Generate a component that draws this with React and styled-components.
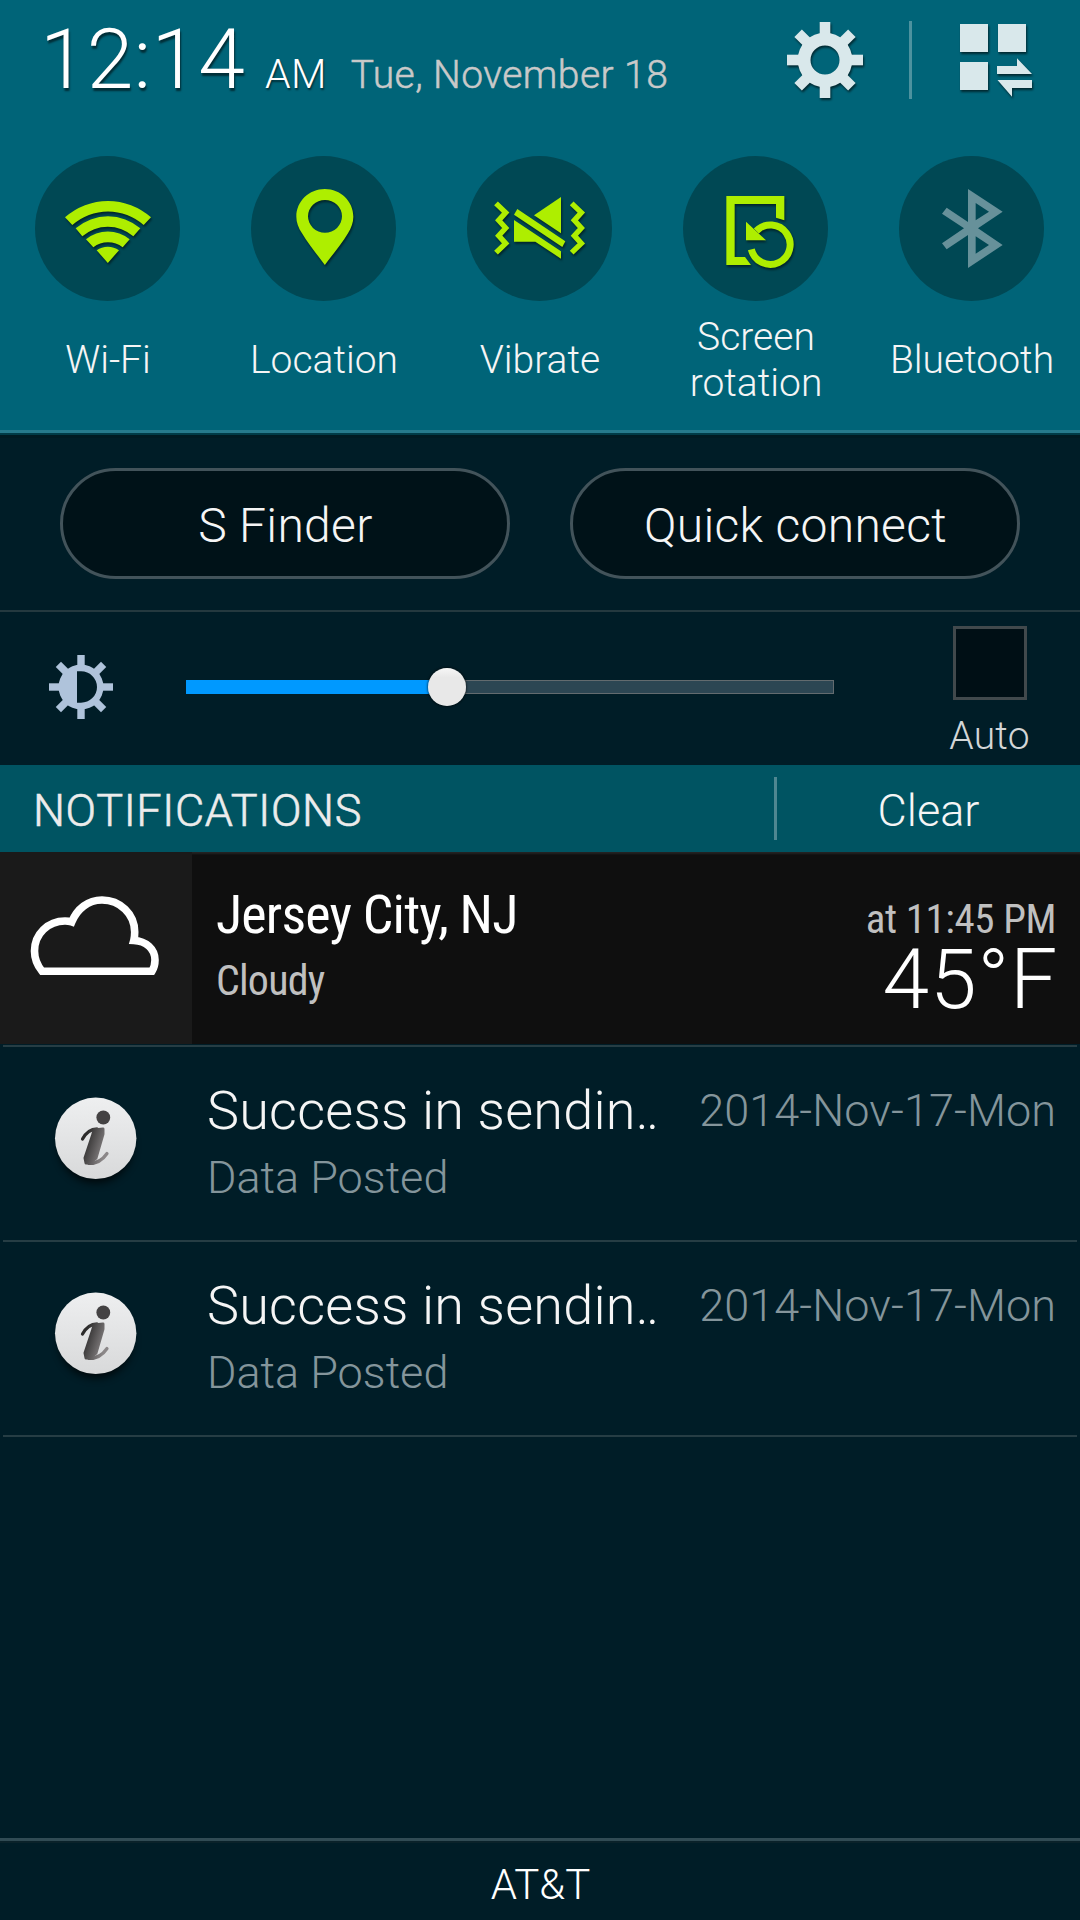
import React from "react";
import styled, { createGlobalStyle } from "styled-components";

const Global = createGlobalStyle`
  * { box-sizing: border-box; }
  html, body { margin: 0; padding: 0; background: #001d27; }
  body { font-family: Roboto, "Liberation Sans", sans-serif; font-weight: 300; }
  button { font: inherit; color: inherit; padding: 0; border: 0; background: none; }
`;

const Screen = styled.div`
  width: 1080px;
  height: 1920px;
  display: flex;
  flex-direction: column;
  overflow: hidden;
  background: #001d27;
  color: #f5f5f5;
`;

const TopPanel = styled.section`
  height: 438px;
  flex: none;
  background: #006478;
  border-bottom: 3px solid #001a22;
  box-shadow: inset 0 -2px #003b47, inset 0 -5px #267a8c;
`;

const Header = styled.header`
  height: 156px;
  display: flex;
  align-items: flex-start;
  padding: 18px 44px 0 40px;
`;

const Clock = styled.div`
  display: flex;
  align-items: baseline;
  white-space: nowrap;
  color: #fff;
`;

const Time = styled.span`
  font-size: 84px;
  line-height: 84px;
  letter-spacing: 0.2px;
  text-shadow: 1px 3px 2px rgba(0, 0, 0, 0.55);
`;

const Meridiem = styled.span`
  margin-left: 20px;
  font-size: 41px;
  letter-spacing: 0.3px;
  text-shadow: 1px 2px 2px rgba(0, 0, 0, 0.55);
`;

const DateText = styled.span`
  margin-left: 24px;
  font-size: 39px;
  letter-spacing: 0.45px;
  color: #c9c9c9;
  -webkit-text-stroke: 0.5px currentColor;
`;

const HeaderActions = styled.div`
  display: flex;
  align-items: flex-start;
  margin-left: auto;
`;

const HeaderIcon = styled.svg`
  width: 84px;
  height: 84px;
  fill: #d9e8eb;
  filter: drop-shadow(1px 2px 1px rgba(0, 0, 0, 0.6));
`;

const HeaderRule = styled.div`
  width: 3px;
  height: 78px;
  margin: 3px 40px 0 42px;
  background: #4d929f;
`;

const Toggles = styled.div`
  display: grid;
  grid-template-columns: repeat(5, 216px);
`;

const Toggle = styled.div`
  display: flex;
  flex-direction: column;
  align-items: center;
`;

const ToggleDisc = styled.div`
  width: 145px;
  height: 145px;
  margin-right: 1px;
  border-radius: 50%;
  background: #004854;
  color: ${(p) => (p.$on ? "#aeee00" : "#67919a")};
`;

const ToggleGlyph = styled.svg`
  display: block;
  width: 145px;
  height: 145px;
  fill: currentColor;
  filter: ${(p) => (p.$on ? "drop-shadow(1px 2px 1px rgba(0, 0, 0, 0.5))" : "none")};
`;

const ToggleLabel = styled.div`
  height: 117px;
  display: flex;
  align-items: center;
  text-align: center;
  white-space: pre;
  font-size: 39px;
  line-height: 46px;
`;

const QuickActions = styled.section`
  height: 174px;
  flex: none;
  display: flex;
  gap: 60px;
  padding: 30px 60px 0;
  border-bottom: 2px solid #24393f;
`;

const Pill = styled.button`
  width: 450px;
  height: 111px;
  padding: 4px 0 0 1px;
  border: 3px solid #42535a;
  border-radius: 56px;
  background: #001218;
  font-size: 48px;
  line-height: 101px;
  letter-spacing: 0.3px;
`;

const Brightness = styled.section`
  height: 153px;
  flex: none;
  display: flex;
  padding: 14px 0 0 49px;
`;

const BrightnessIcon = styled.svg`
  width: 64px;
  height: 64px;
  margin-top: 29px;
  fill: #afc3db;
`;

const Slider = styled.div`
  width: 648px;
  height: 38px;
  margin: 42px 0 0 73px;
  display: flex;
  align-items: center;
`;

const Filled = styled.div`
  height: 14px;
  background: #0099ff;
`;

const Thumb = styled.div`
  width: 38px;
  height: 38px;
  flex: none;
  border-radius: 50%;
  margin: 0 -1px;
  z-index: 1;
  background: linear-gradient(#f6f6f6, #e8e8e8 25%);
  box-shadow: 0 0 2px 1px rgba(0, 0, 0, 0.45);
`;

const Track = styled.div`
  height: 14px;
  flex: 1;
  background: #2c4653;
  border: 1px solid #636b6f;
`;

const Auto = styled.label`
  width: 100px;
  margin-left: 106px;
  display: flex;
  flex-direction: column;
  align-items: center;
  font-size: 39px;
  line-height: 46px;
  color: #d3d6d7;
`;

const AutoLabel = styled.span`
  margin-right: 1px;
  letter-spacing: 0.2px;
`;

const Checkbox = styled.span`
  width: 74px;
  height: 74px;
  margin-bottom: 13px;
  border: 3px solid #41494c;
  background: #000f15;
`;

const SectionBar = styled.section`
  height: 87px;
  flex: none;
  display: flex;
  align-items: center;
  padding: 0 0 0 33px;
  background: #005462;
  font-size: 45px;
  line-height: 60px;
`;

const SectionTitle = styled.h1`
  width: 741px;
  margin: 0;
  padding-top: 5px;
  font-size: inherit;
  font-weight: 300;
  letter-spacing: 0.65px;
  color: #ececec;
  -webkit-text-stroke: 0.6px currentColor;
`;

const SectionRule = styled.div`
  width: 3px;
  height: 63px;
  background: #4f8791;
`;

const ClearButton = styled.button`
  flex: 1;
  padding-top: 5px;
`;

const Weather = styled.article`
  height: 192px;
  flex: none;
  display: flex;
  background: #0f0f0f;
  box-shadow: inset 0 3px 2px -1px #242424;
`;

const WeatherIcon = styled.div`
  width: 192px;
  background: #1a1a1a;
`;

const CloudArt = styled.svg`
  display: block;
  width: 192px;
  height: 192px;
`;

const WeatherText = styled.div`
  flex: 1;
  display: flex;
  flex-direction: column;
  padding: 33px 0 0 24px;
  font-family: "Roboto Condensed", Roboto, sans-serif;
  font-weight: 400;
  letter-spacing: -0.8px;
`;

const City = styled.div`
  font-size: 54px;
  line-height: 60px;
  color: #fff;
`;

const Condition = styled.div`
  margin-top: 12px;
  font-size: 42px;
  line-height: 48px;
  color: #c0c0c0;
`;

const WeatherReading = styled.div`
  padding: 43px 24px 0 0;
  display: flex;
  flex-direction: column;
  align-items: flex-end;
`;

const ReadingTime = styled.div`
  font-family: "Roboto Condensed", Roboto, sans-serif;
  font-weight: 400;
  font-size: 41px;
  line-height: 48px;
  letter-spacing: -0.42px;
  color: #c0c0c0;
`;

const Temperature = styled.div`
  margin-right: -2px;
  font-size: 84px;
  line-height: 74px;
  letter-spacing: 0.8px;
  color: #fff;
`;

const Divider = styled.div`
  height: 2px;
  flex: none;
  margin: ${(p) => (p.$gap ? "1px" : "0")} 3px 0;
  background: #263d44;
`;

const Notice = styled.article`
  height: 193px;
  flex: none;
  display: flex;
  padding-right: 24px;
`;

const InfoBadge = styled.svg`
  width: 120px;
  height: 120px;
  margin: 31px 51px 0 36px;
  overflow: visible;
`;

const NoticeText = styled.div`
  flex: 1;
  padding-top: 34px;
`;

const NoticeTitle = styled.div`
  font-size: 54px;
  line-height: 60px;
  letter-spacing: 0.22px;
  white-space: nowrap;
`;

const Ellipsis = styled.span`
  letter-spacing: -2.4px;
`;

const NoticeBody = styled.div`
  margin-top: 12px;
  font-size: 45px;
  line-height: 50px;
  color: #84959b;
`;

const NoticeDate = styled.div`
  padding-top: 39px;
  font-size: 45px;
  line-height: 50px;
  letter-spacing: 0.06px;
  color: #84959b;
`;

const Footer = styled.footer`
  height: 82px;
  margin-top: auto;
  flex: none;
  display: flex;
  align-items: center;
  justify-content: center;
  padding: 9px 0 0 1px;
  border-top: 3px solid #304b54;
  box-shadow: inset 0 2px #0a222a;
  font-size: 42px;
  line-height: 50px;
  color: #fff;
`;

const ZIGZAG = "167,190 196,218 175,241 196,264 175,287 196,310 167,338";

const toggles = [
  {
    label: "Wi-Fi",
    on: true,
    box: "105 48 435 435",
    art: (
      <path d="M195,232 A194,194 0 0 1 453,232 L431,255 A161,161 0 0 0 217,255Z M227,265 A149,149 0 0 1 421,265 L400,289 A116,116 0 0 0 247,289Z M258,298 A104,104 0 0 1 389,298 L368,322 A71,71 0 0 0 280,322Z M290,331 A57,57 0 0 1 357,331 L323.5,369Z" />
    ),
  },
  {
    label: "Location",
    on: true,
    box: "752 48 435 435",
    art: (
      <path
        fillRule="evenodd"
        d="M973.5,375 C953,347 924,312 905,280 C894,262 888,248 888,230 C888,184 926,147 973.5,147 C1021,147 1059,184 1059,230 C1059,248 1053,262 1043,280 C1024,312 994,347 973.5,375Z M923,229 A51,49 0 1 0 1025,229 A51,49 0 1 0 923,229Z"
      />
    ),
  },
  {
    label: "Vibrate",
    on: true,
    box: "80 48 435 435",
    art: (
      <>
        <g fill="none" stroke="currentColor" strokeWidth="16">
          <polyline points={ZIGZAG} />
          <polyline points={ZIGZAG} transform="translate(227 0)" />
        </g>
        <polygon points="231,207 375,304 366,321 221,224" />
        <polygon points="281,226 362,171 362,280" />
        <polygon points="221,240 362,334 362,356 285,305 221,305" />
      </>
    ),
  },
  {
    label: "Screen\nrotation",
    on: true,
    box: "728 48 435 435",
    art: (
      <>
        <polygon points="858,168 1032,168 1032,241 1007,233 1007,192 883,192 883,351 914,351 932,375 858,375" />
        <path d="M933,328 A59,59 0 1 0 948,273" fill="none" stroke="currentColor" strokeWidth="21" />
        <polygon points="917,245 977,301 917,301" />
      </>
    ),
  },
  {
    label: "Bluetooth",
    on: false,
    box: "177 48 435 435",
    art: (
      <path
        fillRule="evenodd"
        d="M384,147 L488,215 L414,265 L488,315 L384,384 L384,285 L320,328 L306,310 L372,265 L306,221 L320,203 L384,246Z M407,189 L447,215 L407,241Z M407,289 L447,315 L407,341Z"
      />
    ),
  },
];

const notices = [
  { id: 1, title: "Success in sendin", body: "Data Posted", date: "2014-Nov-17-Mon" },
  { id: 2, title: "Success in sendin", body: "Data Posted", date: "2014-Nov-17-Mon" },
];

const GearIcon = () => (
  <HeaderIcon viewBox="-42 -42 84 84">
    <path
      fillRule="evenodd"
      d="M-27.3,0 A27.3,27.3 0 1 0 27.3,0 A27.3,27.3 0 1 0 -27.3,0Z M-14.5,0 A14.5,14.5 0 1 0 14.5,0 A14.5,14.5 0 1 0 -14.5,0Z"
    />
    {[0, 45, 90, 135, 180, 225, 270, 315].map((a) => (
      <rect key={a} x="-5.3" y="-38" width="10.6" height="14" transform={`rotate(${a})`} />
    ))}
  </HeaderIcon>
);

const EditPanelsIcon = () => (
  <HeaderIcon viewBox="952 18 84 84">
    <rect x="960" y="24" width="28" height="28" />
    <rect x="998" y="24" width="28" height="28" />
    <rect x="960" y="62" width="28" height="28" />
    <polygon points="997,66 1017,66 1017,58.3 1032,74 997,74" />
    <polygon points="997.5,80 1032,80 1032,88 1012,88 1012,96.7" />
  </HeaderIcon>
);

const SunIcon = () => (
  <BrightnessIcon viewBox="-32 -32 64 64">
    <path
      fillRule="evenodd"
      d="M-22.5,0 A22.5,22.5 0 1 0 22.5,0 A22.5,22.5 0 1 0 -22.5,0Z M-4,-15.7 H0 A16,15.7 0 0 1 0,15.7 H-4Z"
    />
    {[0, 45, 90, 135, 180, 225, 270, 315].map((a) => (
      <rect key={a} x="-3.7" y="-32" width="7.4" height="12" transform={`rotate(${a})`} />
    ))}
  </BrightnessIcon>
);

const CloudIcon = () => (
  <CloudArt viewBox="0 852 192 192">
    <path
      d="M42,971.2 C37,965 34.5,959 34.5,951 C34.5,934 48,921 65,921 C68,921 69.5,921.3 71.7,922 C77,909 88,900 102,900 C120,900 134.7,914 134.7,932 C134.7,935 134.5,938 133.8,940.5 C146,941 155,949 155,960 C155,964 154,968 152,971.2Z"
      fill="none"
      stroke="#fff"
      strokeWidth="7.6"
    />
  </CloudArt>
);

const InfoIcon = ({ id }) => (
  <InfoBadge viewBox="36 1078 120 120">
    <defs>
      <linearGradient id={`disc${id}`} x1="0" y1="0" x2="0" y2="1">
        <stop offset="0" stopColor="#eeeff0" />
        <stop offset="1" stopColor="#d8d9da" />
      </linearGradient>
      <linearGradient id={`ink${id}`} gradientUnits="userSpaceOnUse" x1="84" y1="1142" x2="106" y2="1149">
        <stop offset="0" stopColor="#2c2b2b" />
        <stop offset="1" stopColor="#8b8788" />
      </linearGradient>
      <filter id={`soft${id}`} x="-30%" y="-30%" width="160%" height="160%">
        <feGaussianBlur stdDeviation="4" />
      </filter>
    </defs>
    <circle cx="95.7" cy="1146" r="37" fill="#000" opacity="0.75" filter={`url(#soft${id})`} />
    <circle cx="95.7" cy="1138.3" r="40.7" fill={`url(#disc${id})`} />
    <circle cx="103.3" cy="1117.5" r="6.9" fill="#444243" />
    <g fill={`url(#ink${id})`} stroke={`url(#ink${id})`} strokeLinecap="round" strokeLinejoin="round">
      <polygon points="94,1130 103,1129 103,1134 96,1158 90,1163 86,1163 85,1158 93,1134" strokeWidth="3" />
      <path d="M82.5,1139 C86,1132.5 90,1129 97,1128.8" fill="none" strokeWidth="3.2" />
      <path d="M89,1163.5 C97,1163.5 103,1159.5 107,1153.5" fill="none" strokeWidth="3.2" />
    </g>
  </InfoBadge>
);

export default function App() {
  const level = 242.5;
  return (
    <Screen>
      <Global />
      <TopPanel>
        <Header>
          <Clock>
            <Time>12:14</Time>
            <Meridiem>AM</Meridiem>
            <DateText>Tue, November 18</DateText>
          </Clock>
          <HeaderActions>
            <GearIcon />
            <HeaderRule />
            <EditPanelsIcon />
          </HeaderActions>
        </Header>
        <Toggles>
          {toggles.map((t) => (
            <Toggle key={t.label}>
              <ToggleDisc $on={t.on}>
                <ToggleGlyph $on={t.on} viewBox={t.box}>
                  {t.art}
                </ToggleGlyph>
              </ToggleDisc>
              <ToggleLabel>{t.label}</ToggleLabel>
            </Toggle>
          ))}
        </Toggles>
      </TopPanel>
      <QuickActions>
        <Pill>S Finder</Pill>
        <Pill>Quick connect</Pill>
      </QuickActions>
      <Brightness>
        <SunIcon />
        <Slider>
          <Filled style={{ width: level }} />
          <Thumb />
          <Track />
        </Slider>
        <Auto>
          <Checkbox />
          <AutoLabel>Auto</AutoLabel>
        </Auto>
      </Brightness>
      <SectionBar>
        <SectionTitle>NOTIFICATIONS</SectionTitle>
        <SectionRule />
        <ClearButton>Clear</ClearButton>
      </SectionBar>
      <Weather>
        <WeatherIcon>
          <CloudIcon />
        </WeatherIcon>
        <WeatherText>
          <City>Jersey City, NJ</City>
          <Condition>Cloudy</Condition>
        </WeatherText>
        <WeatherReading>
          <ReadingTime>at 11:45 PM</ReadingTime>
          <Temperature>45°F</Temperature>
        </WeatherReading>
      </Weather>
      <Divider $gap />
      {notices.map((n) => (
        <React.Fragment key={n.id}>
          <Notice>
            <InfoIcon id={n.id} />
            <NoticeText>
              <NoticeTitle>
                {n.title}
                <Ellipsis>..</Ellipsis>
              </NoticeTitle>
              <NoticeBody>{n.body}</NoticeBody>
            </NoticeText>
            <NoticeDate>{n.date}</NoticeDate>
          </Notice>
          <Divider />
        </React.Fragment>
      ))}
      <Footer>AT&amp;T</Footer>
    </Screen>
  );
}
